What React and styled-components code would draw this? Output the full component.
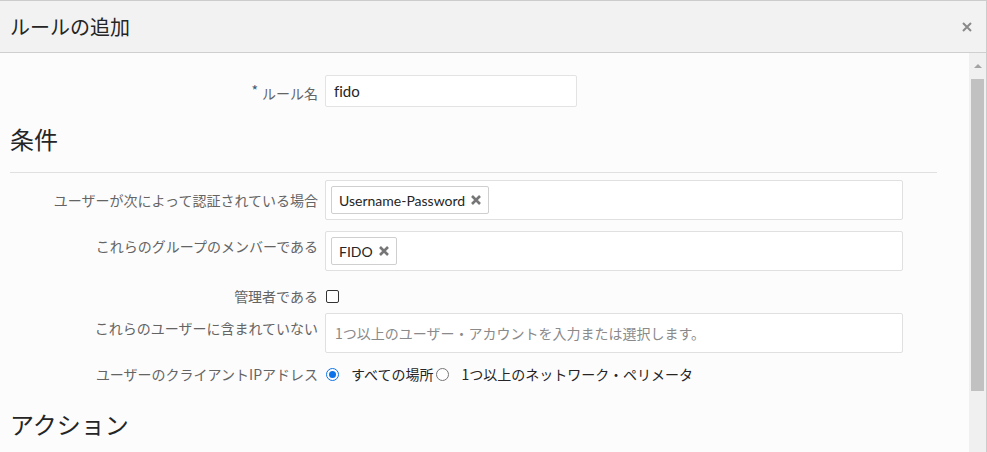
import React from "react";
import styled, { createGlobalStyle } from "styled-components";

const GlobalStyle = createGlobalStyle`
  html, body {
    margin: 0;
    padding: 0;
    background: #fcfcfc;
  }
  body {
    font-family: "Lato", "Noto Sans CJK JP", sans-serif;
    font-variant-ligatures: none;
    color: #333;
  }
`;

const Dialog = styled.div`
  width: 987px;
  height: 452px;
  box-sizing: border-box;
  border-top: 1px solid #ccc;
  border-right: 1px solid #ccc;
  display: flex;
  flex-direction: column;
  overflow: hidden;
  background: #fcfcfc;
`;

const Header = styled.div`
  height: 51px;
  flex-shrink: 0;
  background: #f2f2f2;
  border-bottom: 1px solid #cfcfcf;
  display: flex;
  align-items: center;
  justify-content: space-between;
  padding: 0 12px 0 10px;
`;

const Title = styled.h1`
  margin: 0;
  font-size: 20px;
  font-weight: 400;
  color: #252525;
  font-family: "Noto Sans CJK JP", sans-serif;
`;

const Close = styled.button`
  border: 0;
  background: none;
  padding: 0;
  width: 14px;
  height: 14px;
  display: flex;
  align-items: center;
  justify-content: center;
  color: #8a8a8a;
  cursor: pointer;
`;

const Body = styled.div`
  flex: 1;
  display: flex;
  min-height: 0;
`;

const Content = styled.div`
  flex: 1;
  padding: 22px 32px 0 10px;
  overflow: hidden;
`;

const Scrollbar = styled.div`
  width: 17px;
  background: #f0f0f0;
  display: flex;
  flex-direction: column;
  align-items: center;
  padding-top: 11px;
  box-sizing: border-box;
`;

const ScrollArrow = styled.div`
  width: 0;
  height: 0;
  border-left: 4px solid transparent;
  border-right: 4px solid transparent;
  border-bottom: 4px solid #a3a3a3;
  margin-bottom: 11px;
`;

const Thumb = styled.div`
  width: 13px;
  height: 312px;
  background: #c1c1c1;
`;

const Row = styled.div`
  display: grid;
  grid-template-columns: 308px 1fr;
  column-gap: 7px;
  align-items: ${(p) => (p.$top ? "start" : "center")};
  margin-bottom: ${(p) => p.$mb || 10}px;
`;

const Label = styled.label`
  text-align: right;
  font-size: 14px;
  color: #646464;
  font-family: "Noto Sans CJK JP", sans-serif;
  line-height: 20px;
  padding-top: ${(p) => p.$pt || 0}px;
  white-space: nowrap;
`;

const Req = styled.span`
  color: #3a5a7a;
  font-size: 14px;
  margin-right: 4px;
  vertical-align: 3px;
`;

const TextInput = styled.div`
  width: 252px;
  height: 32px;
  box-sizing: border-box;
  border: 1px solid #e3e3e3;
  border-radius: 2px;
  background: #fff;
  display: flex;
  align-items: center;
  padding: 0 8px;
  font-size: 15px;
  color: #252525;
`;

const SectionTitle = styled.h2`
  margin: 0;
  font-size: 24px;
  font-weight: 400;
  color: #252525;
  font-family: "Noto Sans CJK JP", sans-serif;
  line-height: 32px;
  padding-bottom: ${(p) => p.$pb || 0}px;
  border-bottom: ${(p) => (p.$line ? "1px solid #e0e0e0" : "none")};
  margin-bottom: ${(p) => p.$mb || 0}px;
`;

const TagBox = styled.div`
  width: 578px;
  height: 40px;
  box-sizing: border-box;
  border: 1px solid #e0e0e0;
  border-radius: 2px;
  background: #fff;
  display: flex;
  align-items: center;
  padding: 0 5px;
  gap: 5px;
  font-size: 14px;
  color: #888;
`;

const Placeholder = styled.span`
  padding-left: 4px;
  color: #8a8a8a;
  font-family: "Noto Sans CJK JP", sans-serif;
`;

const Tag = styled.span`
  display: inline-flex;
  align-items: center;
  gap: 6px;
  height: 28px;
  box-sizing: border-box;
  border: 1px solid #cfcfcf;
  border-radius: 2px;
  background: #fff;
  padding: 0 7px 0 7px;
  font-size: 14px;
  color: #252525;
`;

const TagX = styled.span`
  display: inline-flex;
  color: #767676;
`;

const Checkbox = styled.span`
  width: 11px;
  height: 11px;
  border: 1px solid #333;
  border-radius: 2px;
  background: #fff;
  display: inline-block;
  margin-left: 1px;
`;

const RadioGroup = styled.div`
  display: flex;
  align-items: center;
  font-size: 14px;
  color: #252525;
  font-family: "Noto Sans CJK JP", sans-serif;
`;

const Radio = styled.span`
  width: 11px;
  height: 11px;
  border-radius: 50%;
  border: 1px solid ${(p) => (p.$on ? "#0a74e8" : "#767676")};
  background: #fff;
  display: inline-flex;
  align-items: center;
  justify-content: center;
  margin: 0 12px 0 1px;
  flex-shrink: 0;
  &::after {
    content: "";
    width: 7px;
    height: 7px;
    border-radius: 50%;
    background: ${(p) => (p.$on ? "#0a74e8" : "transparent")};
  }
`;

const RadioText = styled.span`
  margin-right: 2px;
`;

const XIcon = ({ size = 10, w = 2 }) => (
  <svg width={size} height={size} viewBox="0 0 10 10">
    <path d="M1 1L9 9M9 1L1 9" stroke="currentColor" strokeWidth={w} />
  </svg>
);

export default function App() {
  return (
    <>
      <GlobalStyle />
      <Dialog>
        <Header>
          <Title>ルールの追加</Title>
          <Close aria-label="close">
            <XIcon size={10} w={2} />
          </Close>
        </Header>
        <Body>
          <Content>
            <Row $mb={16}>
              <Label>
                <Req>*</Req>ルール名
              </Label>
              <TextInput>fido</TextInput>
            </Row>
            <SectionTitle $line $pb={17} $mb={7}>
              条件
            </SectionTitle>
            <Row $mb={11}>
              <Label>ユーザーが次によって認証されている場合</Label>
              <TagBox>
                <Tag>
                  Username-Password
                  <TagX>
                    <XIcon size={10} w={2.6} />
                  </TagX>
                </Tag>
              </TagBox>
            </Row>
            <Row $top $mb={15}>
              <Label $pt={5}>これらのグループのメンバーである</Label>
              <TagBox>
                <Tag>
                  FIDO
                  <TagX>
                    <XIcon size={10} w={2.6} />
                  </TagX>
                </Tag>
              </TagBox>
            </Row>
            <Row $mb={7}>
              <Label>管理者である</Label>
              <div>
                <Checkbox />
              </div>
            </Row>
            <Row $top $mb={11}>
              <Label $pt={5}>これらのユーザーに含まれていない</Label>
              <TagBox>
                <Placeholder>1つ以上のユーザー・アカウントを入力または選択します。</Placeholder>
              </TagBox>
            </Row>
            <Row $mb={24}>
              <Label>ユーザーのクライアントIPアドレス</Label>
              <RadioGroup>
                <Radio $on />
                <RadioText>すべての場所</RadioText>
                <Radio />
                <RadioText>1つ以上のネットワーク・ペリメータ</RadioText>
              </RadioGroup>
            </Row>
            <SectionTitle>アクション</SectionTitle>
          </Content>
          <Scrollbar>
            <ScrollArrow />
            <Thumb />
          </Scrollbar>
        </Body>
      </Dialog>
    </>
  );
}
